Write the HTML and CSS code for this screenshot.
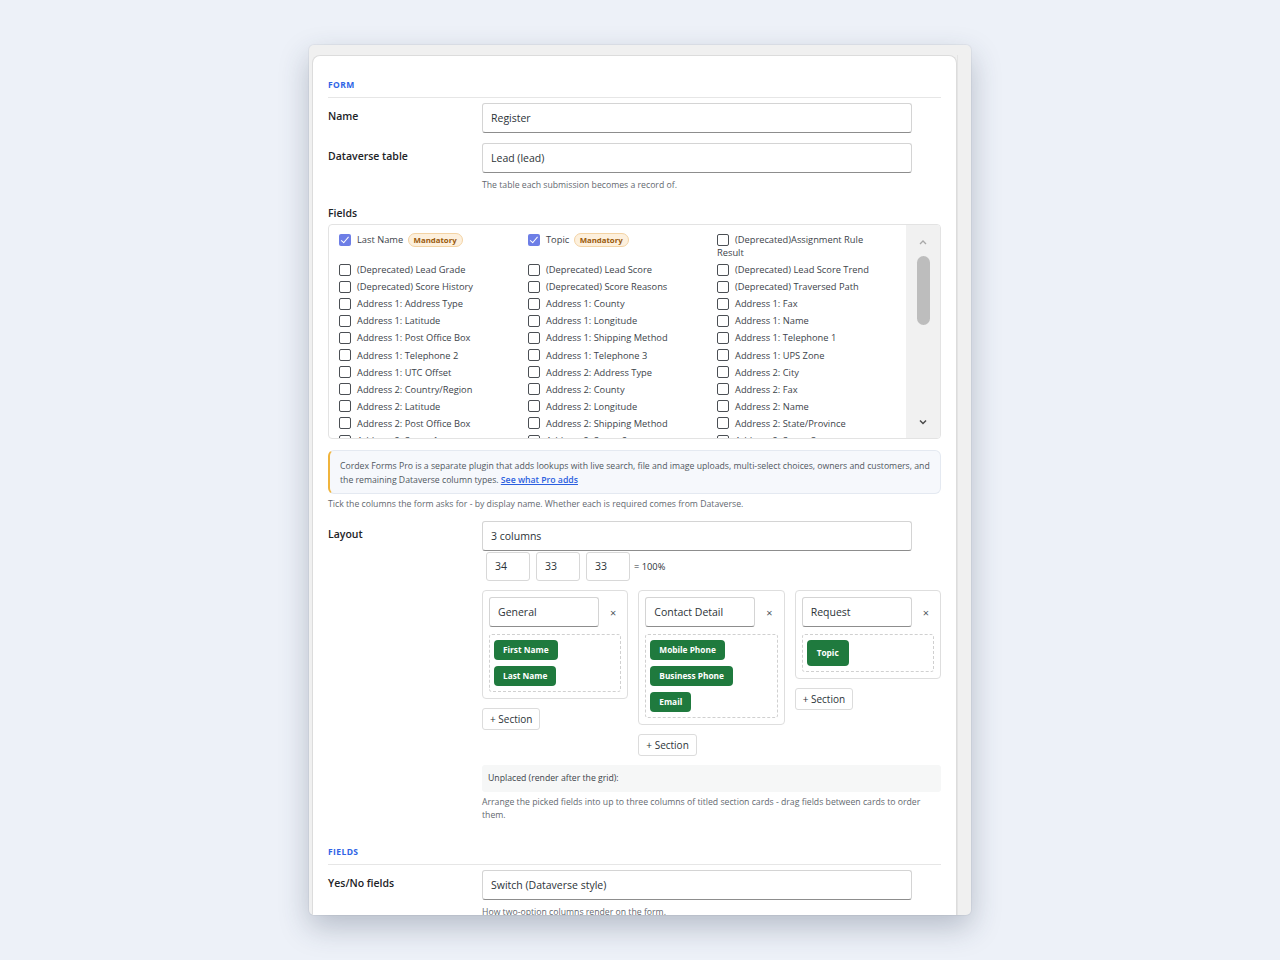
FILE: index.html
```html
<!DOCTYPE html>
<html lang="en">
<head>
  <meta charset="UTF-8">
  <meta name="viewport" content="width=device-width, initial-scale=1.0">
  <title>Form settings</title>
  <link rel="stylesheet" href="styles.css">
</head>
<body>
  <div class="frame">
    <div class="panel">
      <!-- Form section -->
      <div class="sectionHead">Form</div>

      <div class="row">
        <div class="rowLabel">Name</div>
        <div class="rowField">
          <div class="textInput">Register</div>
        </div>
      </div>

      <div class="row">
        <div class="rowLabel">Dataverse table</div>
        <div class="rowField">
          <div class="textInput">Lead (lead)</div>
          <p class="help">The table each submission becomes a record of.</p>
        </div>
      </div>

      <div class="blockLabel">Fields</div>
      <div class="fieldBox">
        <div class="fieldList">
          <label class="fieldItem"><span class="check checked"></span>Last Name <span class="badge">Mandatory</span></label>
          <label class="fieldItem"><span class="check checked"></span>Topic <span class="badge">Mandatory</span></label>
          <label class="fieldItem"><span class="check"></span>(Deprecated)Assignment Rule Result</label>
          <label class="fieldItem"><span class="check"></span>(Deprecated) Lead Grade</label>
          <label class="fieldItem"><span class="check"></span>(Deprecated) Lead Score</label>
          <label class="fieldItem"><span class="check"></span>(Deprecated) Lead Score Trend</label>
          <label class="fieldItem"><span class="check"></span>(Deprecated) Score History</label>
          <label class="fieldItem"><span class="check"></span>(Deprecated) Score Reasons</label>
          <label class="fieldItem"><span class="check"></span>(Deprecated) Traversed Path</label>
          <label class="fieldItem"><span class="check"></span>Address 1: Address Type</label>
          <label class="fieldItem"><span class="check"></span>Address 1: County</label>
          <label class="fieldItem"><span class="check"></span>Address 1: Fax</label>
          <label class="fieldItem"><span class="check"></span>Address 1: Latitude</label>
          <label class="fieldItem"><span class="check"></span>Address 1: Longitude</label>
          <label class="fieldItem"><span class="check"></span>Address 1: Name</label>
          <label class="fieldItem"><span class="check"></span>Address 1: Post Office Box</label>
          <label class="fieldItem"><span class="check"></span>Address 1: Shipping Method</label>
          <label class="fieldItem"><span class="check"></span>Address 1: Telephone 1</label>
          <label class="fieldItem"><span class="check"></span>Address 1: Telephone 2</label>
          <label class="fieldItem"><span class="check"></span>Address 1: Telephone 3</label>
          <label class="fieldItem"><span class="check"></span>Address 1: UPS Zone</label>
          <label class="fieldItem"><span class="check"></span>Address 1: UTC Offset</label>
          <label class="fieldItem"><span class="check"></span>Address 2: Address Type</label>
          <label class="fieldItem"><span class="check"></span>Address 2: City</label>
          <label class="fieldItem"><span class="check"></span>Address 2: Country/Region</label>
          <label class="fieldItem"><span class="check"></span>Address 2: County</label>
          <label class="fieldItem"><span class="check"></span>Address 2: Fax</label>
          <label class="fieldItem"><span class="check"></span>Address 2: Latitude</label>
          <label class="fieldItem"><span class="check"></span>Address 2: Longitude</label>
          <label class="fieldItem"><span class="check"></span>Address 2: Name</label>
          <label class="fieldItem"><span class="check"></span>Address 2: Post Office Box</label>
          <label class="fieldItem"><span class="check"></span>Address 2: Shipping Method</label>
          <label class="fieldItem"><span class="check"></span>Address 2: State/Province</label>
          <label class="fieldItem"><span class="check"></span>Address 2: Street 1</label>
          <label class="fieldItem"><span class="check"></span>Address 2: Street 2</label>
          <label class="fieldItem"><span class="check"></span>Address 2: Street 3</label>
          <label class="fieldItem"><span class="check"></span>Address 2: Telephone 1</label>
          <label class="fieldItem"><span class="check"></span>Address 2: Telephone 2</label>
          <label class="fieldItem"><span class="check"></span>Address 2: Telephone 3</label>
        </div>
        <div class="scrollTrack">
          <svg class="scrollArrow up" width="8" height="6" viewBox="0 0 8 6"><path d="M1 5 L4 2 L7 5" fill="none" stroke="currentColor" stroke-width="1.3"/></svg>
          <div class="scrollThumb"></div>
          <svg class="scrollArrow down" width="8" height="6" viewBox="0 0 8 6"><path d="M1 1.5 L4 4.5 L7 1.5" fill="none" stroke="currentColor" stroke-width="1.5"/></svg>
        </div>
      </div>

      <div class="notice">
        Cordex Forms Pro is a separate plugin that adds lookups with live search, file and image uploads, multi-select choices, owners and customers, and the remaining Dataverse column types. <a href="#">See what Pro adds</a>
      </div>
      <p class="help flush">Tick the columns the form asks for - by display name. Whether each is required comes from Dataverse.</p>

      <!-- Layout -->
      <div class="row layoutRow">
        <div class="rowLabel">Layout</div>
        <div class="rowField">
          <div class="textInput">3 columns</div>
          <div class="pctRow">
            <div class="pctInput">34</div>
            <div class="pctInput">33</div>
            <div class="pctInput">33</div>
            <span class="pctTotal">= 100%</span>
          </div>

          <div class="cardGrid">
            <div class="cardCol">
              <div class="sectionCard">
                <div class="cardHead">
                  <div class="titleInput">General</div>
                  <span class="removeX">&times;</span>
                </div>
                <div class="dropZone">
                  <span class="chip">First Name</span>
                  <span class="chip">Last Name</span>
                </div>
              </div>
              <button class="addSection">+ Section</button>
            </div>

            <div class="cardCol">
              <div class="sectionCard">
                <div class="cardHead">
                  <div class="titleInput">Contact Detail</div>
                  <span class="removeX">&times;</span>
                </div>
                <div class="dropZone">
                  <span class="chip">Mobile Phone</span>
                  <span class="chip">Business Phone</span>
                  <span class="chip">Email</span>
                </div>
              </div>
              <button class="addSection">+ Section</button>
            </div>

            <div class="cardCol">
              <div class="sectionCard">
                <div class="cardHead">
                  <div class="titleInput">Request</div>
                  <span class="removeX">&times;</span>
                </div>
                <div class="dropZone">
                  <span class="chip tall">Topic</span>
                </div>
              </div>
              <button class="addSection">+ Section</button>
            </div>
          </div>

          <div class="unplaced">Unplaced (render after the grid):</div>
          <p class="help">Arrange the picked fields into up to three columns of titled section cards - drag fields between cards to order them.</p>
        </div>
      </div>

      <!-- Fields section -->
      <div class="sectionHead spaced">Fields</div>

      <div class="row">
        <div class="rowLabel">Yes/No fields</div>
        <div class="rowField">
          <div class="textInput">Switch (Dataverse style)</div>
          <p class="help">How two-option columns render on the form.</p>
        </div>
      </div>
    </div>
    <div class="sideStrip"></div>
  </div>
</body>
</html>
```

FILE: styles.css
```css
body {
  margin: 0;
  padding: 0;
  font-family: "Open Sans", "Noto Sans", Arial, sans-serif;
  background-color: #edf1f8;
  height: 960px;
  display: flex;
  justify-content: center;
  align-items: center;
  color: #1d2327;
}

/* Window frame */
.frame {
  width: 662px;
  height: 870px;
  background-color: #f0f0f0;
  border-radius: 5px;
  box-shadow: 0 12px 30px rgba(40, 55, 80, 0.28), 0 0 0 1px rgba(0, 0, 0, 0.04);
  overflow: hidden;
  display: flex;
  padding: 10px 0 0 3px;
  box-sizing: border-box;
}

.panel {
  width: 645px;
  flex: none;
  background-color: #fff;
  border: 1px solid #dcdcdc;
  border-bottom: none;
  border-radius: 8px 8px 0 0;
  padding: 0 15px;
  box-sizing: border-box;
  overflow: hidden;
}

.sideStrip {
  flex: 1;
  border-left: 1px solid #e4e4e4;
}

/* Section header */
.sectionHead {
  margin-top: 23px;
  padding-bottom: 6px;
  border-bottom: 1px solid #e6e6e6;
  font-size: 8.5px;
  line-height: 12px;
  font-weight: 700;
  letter-spacing: 0.4px;
  text-transform: uppercase;
  color: #2f64e6;
}

.sectionHead.spaced {
  margin-top: 24px;
}

/* Label / field rows */
.row {
  display: grid;
  grid-template-columns: 154px 1fr;
  margin-top: 5px;
}

.row + .row {
  margin-top: 10px;
}

.rowLabel {
  font-size: 10.5px;
  font-weight: 600;
  line-height: 16px;
  padding-top: 5px;
}

.textInput {
  width: 430px;
  height: 30px;
  box-sizing: border-box;
  border: 1px solid #d4d4d4;
  border-bottom: 1.5px solid #8d8d8d;
  border-radius: 3px;
  padding: 0 8px;
  font-size: 10.5px;
  line-height: 28px;
  color: #2c3338;
}

.help {
  margin: 5px 0 0;
  font-size: 8.7px;
  line-height: 14px;
  color: #646970;
}

.help.flush {
  margin-top: 3px;
}

.blockLabel {
  margin-top: 13px;
  font-size: 10.5px;
  font-weight: 600;
  line-height: 16px;
}

/* Field picker */
.fieldBox {
  margin-top: 3px;
  height: 215px;
  box-sizing: border-box;
  border: 1px solid #e3e3e3;
  border-radius: 4px;
  display: flex;
  overflow: hidden;
}

.fieldList {
  flex: 1;
  display: grid;
  grid-template-columns: repeat(3, 1fr);
  column-gap: 10px;
  row-gap: 4.1px;
  align-content: start;
  padding: 8px 10px 0 10px;
  overflow: hidden;
}

.fieldItem {
  padding-right: 12px;
  font-size: 9.3px;
  line-height: 13px;
  color: #3c434a;
}

.check {
  display: inline-block;
  width: 12px;
  height: 12px;
  box-sizing: border-box;
  border: 1.3px solid #4b4f54;
  border-radius: 2px;
  margin-right: 6px;
  vertical-align: -2.5px;
  position: relative;
}

.check.checked {
  border: none;
  background-color: #6d7ee6;
}

.check.checked::after {
  content: "";
  position: absolute;
  left: 4px;
  top: 1.5px;
  width: 3px;
  height: 6.5px;
  border: solid #fff;
  border-width: 0 1.6px 1.6px 0;
  transform: rotate(40deg);
}

.badge {
  display: inline-block;
  margin-left: 2px;
  padding: 0 5px;
  line-height: 12px;
  border: 1px solid #f3d3a4;
  border-radius: 8px;
  background-color: #fdf0dd;
  color: #9a5a0c;
  font-size: 7.8px;
  font-weight: 700;
  vertical-align: 0;
}

.scrollTrack {
  width: 34px;
  flex: none;
  background-color: #f1f1f1;
  display: flex;
  flex-direction: column;
  align-items: center;
}

.scrollArrow {
  display: block;
}

.scrollArrow.up {
  margin-top: 14px;
  color: #a8a8a8;
}

.scrollArrow.down {
  margin-top: auto;
  margin-bottom: 13px;
  color: #4a4a4a;
}

.scrollThumb {
  width: 13px;
  height: 69px;
  margin-top: 11px;
  border-radius: 7px;
  background-color: #bdbdbd;
}

/* Pro notice */
.notice {
  margin-top: 11px;
  padding: 8px 9px 6px 10px;
  border: 1px solid #e4e9f1;
  border-left: 2px solid #f0b43c;
  border-radius: 6px;
  background-color: #f6f8fc;
  font-size: 8.7px;
  line-height: 14px;
  color: #50575e;
}

.notice a {
  color: #2b5fe0;
  font-weight: 600;
  text-decoration: underline;
}

/* Layout */
.layoutRow {
  margin-top: 10px;
}

.pctRow {
  display: flex;
  align-items: center;
  gap: 6px;
  margin: 1px 0 0 4px;
}

.pctInput {
  width: 44px;
  height: 29px;
  box-sizing: border-box;
  border: 1px solid #d8d8d8;
  border-radius: 3px;
  padding: 0 8px;
  font-size: 10.5px;
  line-height: 27px;
  color: #2c3338;
}

.pctTotal {
  margin-left: -2px;
  font-size: 9.3px;
  color: #2c3338;
}

.cardGrid {
  display: grid;
  grid-template-columns: repeat(3, 1fr);
  column-gap: 10px;
  align-items: start;
  margin-top: 9px;
}

.cardCol {
  display: flex;
  flex-direction: column;
  align-items: flex-start;
}

.sectionCard {
  align-self: stretch;
  border: 1px solid #dedede;
  border-radius: 4px;
  padding: 6px;
}

.cardHead {
  display: flex;
  align-items: center;
}

.titleInput {
  width: 110px;
  height: 30px;
  flex: none;
  box-sizing: border-box;
  border: 1px solid #d4d4d4;
  border-bottom: 1.5px solid #8d8d8d;
  border-radius: 3px;
  padding: 0 8px;
  font-size: 10.5px;
  line-height: 28px;
  color: #2c3338;
}

.removeX {
  flex: 1;
  padding-left: 6px;
  text-align: center;
  font-size: 11px;
  color: #50575e;
}

.dropZone {
  margin-top: 7px;
  border: 1px dashed #d0d0d0;
  border-radius: 3px;
  padding: 5px 4px;
  display: flex;
  flex-direction: column;
  align-items: flex-start;
  gap: 6px;
}

.chip {
  display: inline-block;
  padding: 0 9px;
  height: 20px;
  line-height: 20px;
  border-radius: 4px;
  background-color: #1f7a3e;
  color: #fff;
  font-size: 8.3px;
  font-weight: 700;
}

.chip.tall {
  height: 26px;
  line-height: 26px;
  padding: 0 10px;
}

.addSection {
  margin-top: 9px;
  height: 22px;
  padding: 0 7px;
  border: 1px solid #dcdcdc;
  border-radius: 3px;
  background-color: #fff;
  font-family: inherit;
  font-size: 10px;
  color: #2c3338;
}

.unplaced {
  margin-top: 9px;
  height: 27px;
  padding: 0 6px;
  background-color: #f6f7f7;
  border-radius: 3px;
  font-size: 8.7px;
  line-height: 27px;
  color: #3c434a;
}

.unplaced + .help {
  margin-top: 4px;
  line-height: 13px;
}
```
